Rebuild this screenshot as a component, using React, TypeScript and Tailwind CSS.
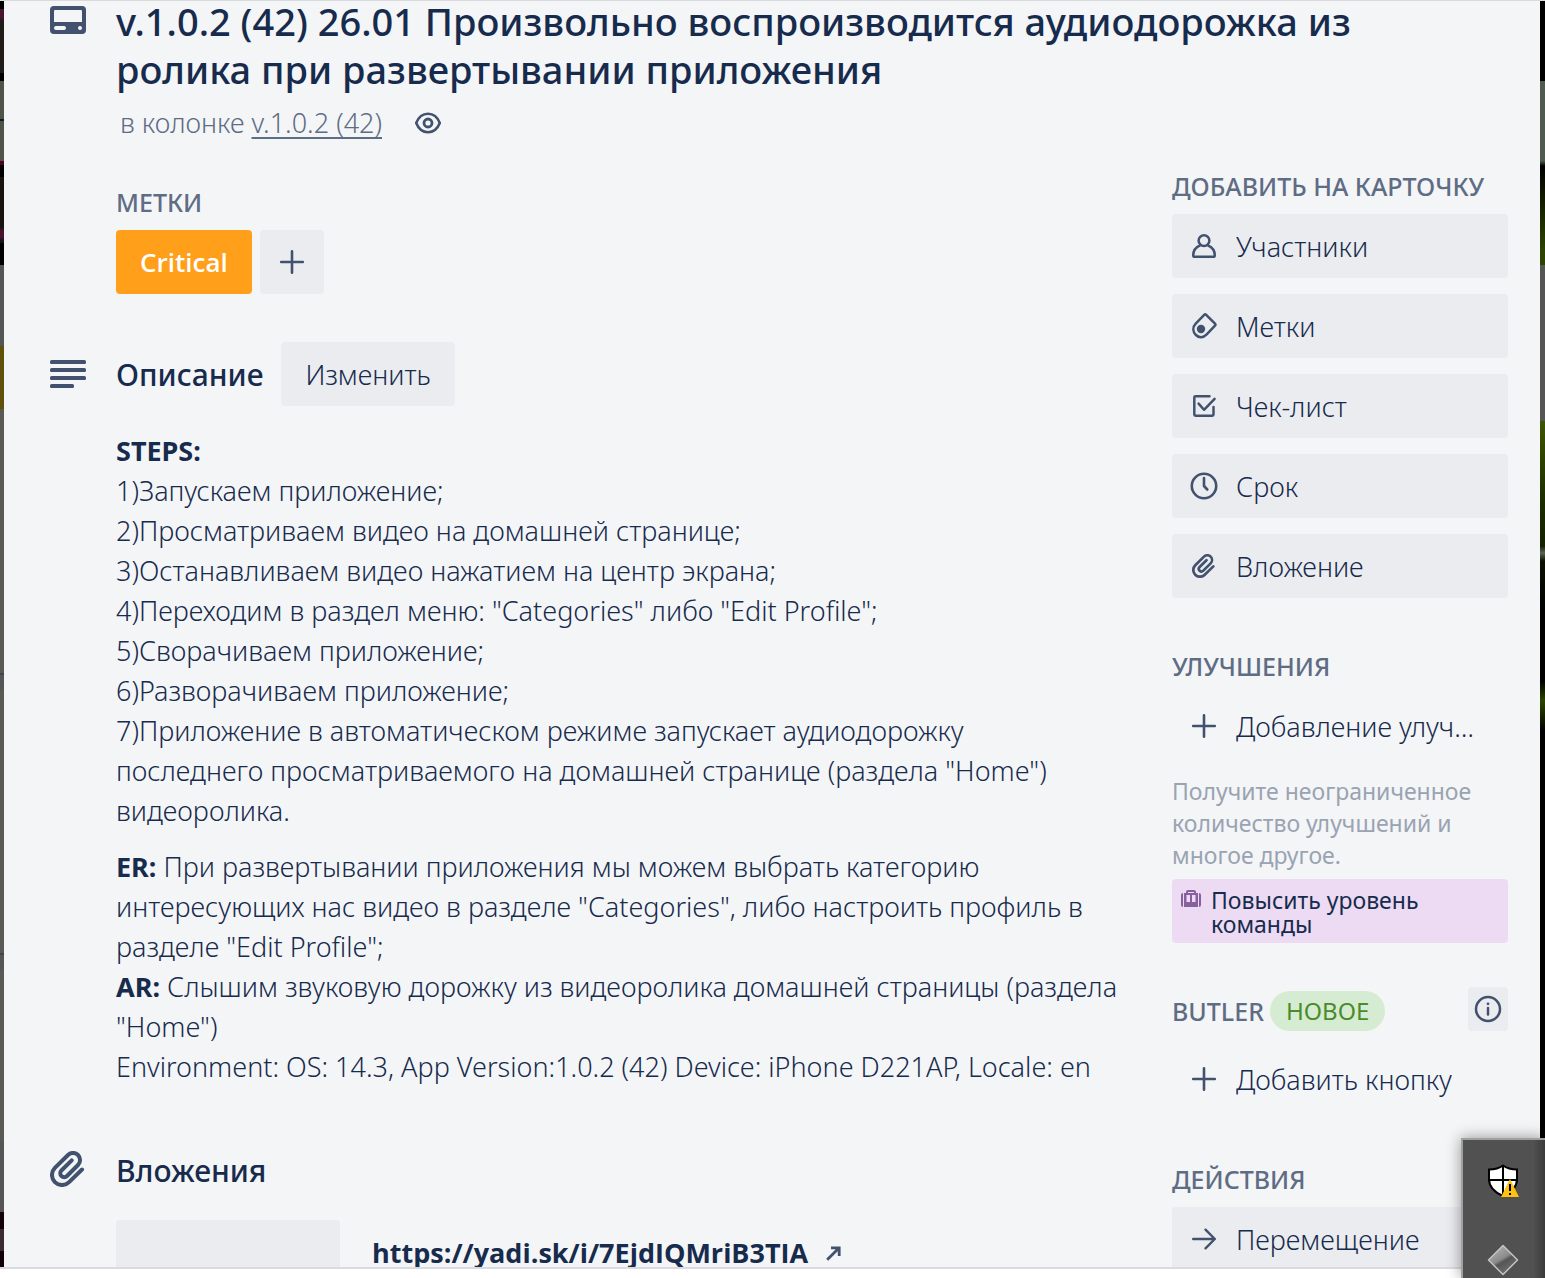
import type { ReactNode } from "react";

const font = "font-['Noto_Sans','Open_Sans',sans-serif]";
const boldFont = "font-['Open_Sans','Noto_Sans',sans-serif]";

function CardIcon() {
  return (
    <svg viewBox="0 0 36 28" className="mt-[5px] h-7 w-9" fill="currentColor" aria-hidden="true">
      <path
        fillRule="evenodd"
        d="M4 0H32A4 4 0 0 1 36 4V24A4 4 0 0 1 32 28H4A4 4 0 0 1 0 24V4A4 4 0 0 1 4 0ZM5 4A1 1 0 0 0 4 5V16H32V5A1 1 0 0 0 31 4ZM6 20A2 2 0 0 0 6 24H14A2 2 0 0 0 14 20ZM30 20A2 2 0 0 0 30 24A2 2 0 0 0 30 20Z"
      />
    </svg>
  );
}

function LinesIcon() {
  return (
    <svg viewBox="0 0 36 28" className="h-7 w-9" fill="currentColor" aria-hidden="true">
      <rect width="36" height="4" rx="1.5" />
      <rect y="8" width="36" height="4" rx="1.5" />
      <rect y="16" width="36" height="4" rx="1.5" />
      <rect y="24" width="24" height="4" rx="1.5" />
    </svg>
  );
}

function ClipIcon({ className }: { className: string }) {
  return (
    <svg viewBox="0 0 36 36" className={className} fill="none" stroke="currentColor" strokeWidth="4" strokeLinecap="round" aria-hidden="true">
      <path d="M32 18.5L19.1 31.1A10 10 0 0 1 4.9 16.9L18 4A7.07 7.07 0 0 1 28 14L17 25A3.9 3.9 0 0 1 11.4 19.5L21.7 9.3" />
    </svg>
  );
}

function EyeIcon() {
  return (
    <svg viewBox="0 0 28 24" className="h-6 w-7" fill="none" stroke="currentColor" aria-hidden="true">
      <path strokeWidth="2.6" strokeLinejoin="round" d="M2.2 12C4.6 6 9 2.8 14 2.8S23.4 6 25.8 12C23.4 18 19 21.2 14 21.2S4.6 18 2.2 12Z" />
      <circle cx="14" cy="12" r="4" strokeWidth="2.8" />
    </svg>
  );
}

function PlusIcon() {
  return (
    <svg viewBox="0 0 28 28" className="size-7 shrink-0 text-[#42526e]" stroke="currentColor" strokeWidth="2.6" strokeLinecap="round" aria-hidden="true">
      <path d="M14 3.2V24.8M3.2 14H24.8" />
    </svg>
  );
}

function UserIcon() {
  return (
    <svg viewBox="0 0 28 28" className="size-7" fill="none" stroke="currentColor" strokeWidth="2.5" strokeLinejoin="round" aria-hidden="true">
      <circle cx="14" cy="8.6" r="5.4" />
      <path d="M10.3 13.3C6 15 3.2 18.5 3.2 23.2Q3.2 24.8 4.8 24.8H23.2Q24.8 24.8 24.8 23.2C24.8 18.5 22 15 17.7 13.3" />
    </svg>
  );
}

function TagIcon() {
  return (
    <svg viewBox="0 0 28 28" className="size-7" aria-hidden="true">
      <path
        fill="none"
        stroke="currentColor"
        strokeWidth="2.5"
        strokeLinejoin="round"
        d="M14.2 2.9Q15.2 1.9 16.2 2.9L25 11.7Q26 12.7 25 13.7L16.7 22.4C13.3 26 8.8 25.9 5.9 23C2.7 19.8 2.3 15.2 5.7 11.6Z"
      />
      <circle cx="11" cy="17" r="4.2" fill="currentColor" />
    </svg>
  );
}

function CheckIcon() {
  return (
    <svg viewBox="0 0 28 28" className="size-7" fill="none" stroke="currentColor" strokeWidth="2.5" strokeLinecap="round" strokeLinejoin="round" aria-hidden="true">
      <path d="M19.5 4.3H5.5Q4.3 4.3 4.3 5.5V22.5Q4.3 23.7 5.5 23.7H22.3Q23.5 23.7 23.5 22.5V15" />
      <path d="M8.6 11.6L14 17.8L24.6 6.8" />
    </svg>
  );
}

function ClockIcon() {
  return (
    <svg viewBox="0 0 28 28" className="size-7" fill="none" stroke="currentColor" strokeWidth="2.6" aria-hidden="true">
      <circle cx="14" cy="14" r="12.2" />
      <path strokeLinecap="round" strokeLinejoin="round" d="M14 6V14L17.3 17.5" />
    </svg>
  );
}

function InfoIcon() {
  return (
    <svg viewBox="0 0 28 28" className="size-7" fill="none" stroke="currentColor" strokeWidth="2.5" aria-hidden="true">
      <circle cx="14" cy="14" r="12" />
      <path strokeLinecap="round" d="M14 13V19.5" />
      <circle cx="14" cy="8.8" r="1.4" fill="currentColor" stroke="none" />
    </svg>
  );
}

function ArrowIcon() {
  return (
    <svg viewBox="0 0 28 28" className="size-7" fill="none" stroke="currentColor" strokeWidth="2.4" strokeLinecap="round" strokeLinejoin="round" aria-hidden="true">
      <path d="M3.2 14H24.8M15.5 4.7L24.8 14L15.5 23.3" />
    </svg>
  );
}

function BriefcaseIcon() {
  return (
    <svg viewBox="0 0 20 18" className="mt-0.5 h-[18px] w-5 shrink-0 text-[#89609e]" fill="currentColor" aria-hidden="true">
      <path d="M2 3V17Q0 17 0 15V5Q0 3 2 3ZM18 3V17Q20 17 20 15V5Q20 3 18 3Z" />
      <path fillRule="evenodd" d="M3 3H5V2Q5 0 7 0H13Q15 0 15 2V3H17V17H3ZM7 3H13V2H7ZM5.5 5V12H9V5ZM11 5V12H14.5V5Z" />
    </svg>
  );
}

function ExternalIcon() {
  return (
    <svg viewBox="0 0 16 16" className="size-4 text-[#42526e]" fill="none" stroke="currentColor" strokeWidth="2.8" aria-hidden="true">
      <path d="M1.2 14.8L13 3M5 2.8H13.2V11" />
    </svg>
  );
}

function SideButton({ icon, label, plain }: { icon: ReactNode; label: string; plain?: boolean }) {
  return (
    <button
      type="button"
      className={`flex h-16 w-full shrink-0 items-center gap-[18px] rounded px-[18px] text-left text-[27px] font-light ${plain ? "" : "bg-[#ebecf0]"}`}
    >
      <span className="flex size-7 shrink-0 items-center justify-center text-[#42526e]">{icon}</span>
      <span className="truncate pt-0.5">{label}</span>
    </button>
  );
}

function SideHeading({ children }: { children: ReactNode }) {
  return <h3 className="text-[25px] leading-8 font-medium whitespace-nowrap text-[#5e6c84] uppercase">{children}</h3>;
}

function TrayPopup() {
  return (
    <div className="fixed right-0 bottom-0 flex h-[140px] w-[84px] flex-col items-center gap-[46px] border-t-2 border-l-2 border-[#a0a0a0] bg-[linear-gradient(90deg,#515151_0,#515151_86%,#3a3a3a_100%)] pt-6 pr-0.5 shadow-[0_0_14px_rgba(0,0,0,0.4)]">
      <svg viewBox="0 0 32 34" className="h-[34px] w-8 shrink-0" role="img" aria-label="Windows Security">
        <path fill="#fff" stroke="#000" strokeWidth="2" d="M16 1.5C12 4.5 7 5.5 2 5.5V15C2 23 8 28.5 16 32C24 28.5 30 23 30 15V5.5C25 5.5 20 4.5 16 1.5Z" />
        <path stroke="#000" strokeWidth="2" d="M16 1V32M1 16H31" />
        <path fill="#ffc20e" d="M23 15L32 33H14Z" />
        <path fill="#000" d="M22 20H24V27H22ZM22 29H24V31H22Z" />
      </svg>
      <svg viewBox="0 0 32 32" className="size-8 shrink-0" role="img" aria-label="Diamond">
        <defs>
          <linearGradient id="gem" x1="0.2" y1="0" x2="0.8" y2="1">
            <stop offset="0" stopColor="#b5b5b5" />
            <stop offset="0.45" stopColor="#8a8a8a" />
            <stop offset="0.55" stopColor="#555" />
            <stop offset="1" stopColor="#777" />
          </linearGradient>
        </defs>
        <path fill="url(#gem)" stroke="#c4c4c4" strokeWidth="1.5" strokeLinejoin="round" d="M16 1.5L30.5 16L16 30.5L1.5 16Z" />
      </svg>
    </div>
  );
}

const sectionGrid = "grid grid-cols-[66px_minmax(0,1fr)] text-[#42526e]";

export default function App() {
  return (
    <div className={`flex h-screen flex-col overflow-hidden bg-white text-[#172b4d] ${font}`}>
      <div className="flex min-h-0 flex-1 overflow-hidden border-t border-b-2 border-t-[#d9dadd] border-b-[#d9dbdf]">
        <div className="w-1 shrink-0 bg-[linear-gradient(180deg,#000_0_8px,#4a1430_8px_16px,#1f1c1a_20px_72px,#000_72px_80px,#4e5548_80px_118px,#101c28_118px_120px,#4e5548_120px_160px,#500020_160px_164px,#000_164px_176px,#171411_176px_226px,#4a1430_230px_236px,#171411_240px_242px,#000_242px_264px,#555_264px_345px,#5f500a_345px_408px,#5b5955_408px_672px,#444_672px_674px,#555_674px_688px,#5b5955_688px_952px,#444_952px_954px,#555_954px_968px,#5b5955_968px_1140px,#555_1140px_1211px,#14020a_1211px_1228px,#3a2c30_1228px_1250px,#100208_1250px)]" />
        <main className="flex min-w-0 flex-1 flex-col bg-[#f4f5f7] pr-8 pl-[46px]">
          <header className={`${sectionGrid} h-[169px] shrink-0`}>
            <CardIcon />
            <div>
              <h1 className="-mt-1 text-[38px] leading-12 font-medium text-[#172b4d]">
                v.1.0.2 (42) 26.01 Произвольно воспроизводится аудиодорожка из
                <br />
                ролика при развертывании приложения
              </h1>
              <div className="mt-2.5 flex items-center gap-8 pl-1">
                <p className="text-[27px] leading-10 font-light text-[#5e6c84]">
                  в колонке{" "}
                  <a href="#list" className="underline decoration-2 underline-offset-4">
                    v.1.0.2 (42)
                  </a>
                </p>
                <EyeIcon />
              </div>
            </div>
          </header>

          <div className="flex items-start gap-8">
            <div className="min-w-0 flex-1 pt-4">
              <section className={sectionGrid}>
                <div className="col-start-2">
                  <SideHeading>Метки</SideHeading>
                  <div className="mt-3 flex gap-2">
                    <button type="button" className={`h-16 rounded bg-[#ff9f1a] px-6 text-[26px] font-semibold text-white ${boldFont}`}>
                      Critical
                    </button>
                    <button type="button" aria-label="Добавить метку" className="flex size-16 items-center justify-center rounded bg-[#ebecf0]">
                      <PlusIcon />
                    </button>
                  </div>
                </div>
              </section>

              <section className={`${sectionGrid} mt-12`}>
                <div className="flex items-center">
                  <LinesIcon />
                </div>
                <div className="flex items-center gap-[18px] text-[#172b4d]">
                  <h2 className="pt-0.5 text-[30px] leading-10 font-medium">Описание</h2>
                  <button type="button" className="h-16 rounded bg-[#ebecf0] px-6 pt-0.5 text-[27px] font-light">
                    Изменить
                  </button>
                </div>
                <div className="col-start-2 mt-[25px] flex flex-col gap-4 text-[27px] leading-10 font-light text-[#172b4d]">
                  <p>
                    <strong className="font-bold">STEPS:</strong>
                    <br />
                    1)Запускаем приложение;
                    <br />
                    2)Просматриваем видео на домашней странице;
                    <br />
                    3)Останавливаем видео нажатием на центр экрана;
                    <br />
                    4)Переходим в раздел меню: "Categories" либо "Edit Profile";
                    <br />
                    5)Сворачиваем приложение;
                    <br />
                    6)Разворачиваем приложение;
                    <br />
                    7)Приложение в автоматическом режиме запускает аудиодорожку
                    <br />
                    последнего просматриваемого на домашней странице (раздела "Home") видеоролика.
                  </p>
                  <p>
                    <strong className="font-bold">ER:</strong> При развертывании приложения мы можем выбрать категорию интересующих нас видео в разделе "Categories", либо настроить профиль в разделе "Edit Profile";
                    <br />
                    <strong className="font-bold">AR:</strong> Слышим звуковую дорожку из видеоролика домашней страницы (раздела "Home")
                    <br />
                    Environment: OS: 14.3, App Version:1.0.2 (42) Device: iPhone D221AP, Locale: en
                  </p>
                </div>
              </section>

              <section className={`${sectionGrid} mt-[62px]`}>
                <ClipIcon className="mt-0.5 size-9" />
                <h2 className="pt-0.5 text-[30px] leading-10 font-medium text-[#172b4d]">Вложения</h2>
                <div className="col-start-2 mt-[29px] flex gap-8">
                  <div className="h-40 w-56 shrink-0 rounded bg-[#ebecf0]" />
                  <a href="https://yadi.sk/i/7EjdIQMriB3TIA" className={`mt-[13px] flex h-10 items-center gap-[18px] text-[27px] font-bold text-[#172b4d] ${boldFont}`}>
                    https://yadi.sk/i/7EjdIQMriB3TIA
                    <ExternalIcon />
                  </a>
                </div>
              </section>
            </div>

            <aside className="flex w-[336px] shrink-0 flex-col">
              <SideHeading>Добавить на карточку</SideHeading>
              <div className="mt-3 flex flex-col gap-4">
                <SideButton icon={<UserIcon />} label="Участники" />
                <SideButton icon={<TagIcon />} label="Метки" />
                <SideButton icon={<CheckIcon />} label="Чек-лист" />
                <SideButton icon={<ClockIcon />} label="Срок" />
                <SideButton icon={<ClipIcon className="size-6" />} label="Вложение" />
              </div>

              <div className="mt-[52px] mb-3">
                <SideHeading>Улучшения</SideHeading>
              </div>
              <SideButton plain icon={<PlusIcon />} label="Добавление улучшений" />
              <p className="mt-[17px] text-[23px] leading-8 text-[#9aa3b2]">Получите неограниченное количество улучшений и многое другое.</p>
              <button type="button" className="mt-2 flex h-16 items-start gap-[10px] rounded bg-[#eddbf4] px-[9px] pt-[9px] text-left text-[23px] leading-6">
                <BriefcaseIcon />
                Повысить уровень команды
              </button>

              <div className="mt-11 mb-4 flex h-11 items-end">
                <div className="flex h-10 items-center gap-1.5">
                  <SideHeading>Butler</SideHeading>
                  <span className="flex h-10 items-center rounded-full bg-[#d6ecd2] px-4 text-[24px] text-[#4a8b2a] uppercase">Новое</span>
                </div>
                <button type="button" aria-label="Информация" className="ml-auto flex h-11 w-10 items-center justify-center rounded bg-[#ebecf0] text-[#42526e]">
                  <InfoIcon />
                </button>
              </div>
              <SideButton plain icon={<PlusIcon />} label="Добавить кнопку" />

              <div className="mt-[52px] mb-3">
                <SideHeading>Действия</SideHeading>
              </div>
              <SideButton icon={<ArrowIcon />} label="Перемещение" />
            </aside>
          </div>
        </main>
        <div className="w-[5px] shrink-0 bg-[linear-gradient(180deg,#000_0_80px,#505a50_80px_160px,#000_165px,#2c4400_250px_264px,#555_264px_420px,#3d5600_420px,#1c2c00_500px,#142000_545px,#5a6455_552px,#0a1000_560px,#000_610px_680px,#2c4400_700px,#000_730px)]" />
      </div>
      <footer className="h-[9px] shrink-0" />
      <TrayPopup />
    </div>
  );
}
